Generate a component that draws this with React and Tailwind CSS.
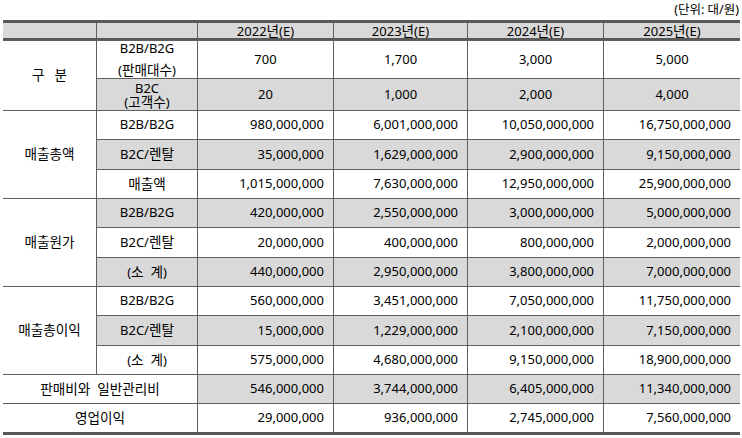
const years = ["2022년(E)", "2023년(E)", "2024년(E)", "2025년(E)"];

const groups = [
  {
    label: "매출총액",
    rows: [
      { name: "B2B/B2G", shade: false, v: ["980,000,000", "6,001,000,000", "10,050,000,000", "16,750,000,000"] },
      { name: "B2C/렌탈", shade: true, v: ["35,000,000", "1,629,000,000", "2,900,000,000", "9,150,000,000"] },
      { name: "매출액", shade: false, v: ["1,015,000,000", "7,630,000,000", "12,950,000,000", "25,900,000,000"] },
    ],
  },
  {
    label: "매출원가",
    rows: [
      { name: "B2B/B2G", shade: true, v: ["420,000,000", "2,550,000,000", "3,000,000,000", "5,000,000,000"] },
      { name: "B2C/렌탈", shade: false, v: ["20,000,000", "400,000,000", "800,000,000", "2,000,000,000"] },
      { name: "(소\u00a0\u00a0계)", shade: true, v: ["440,000,000", "2,950,000,000", "3,800,000,000", "7,000,000,000"] },
    ],
  },
  {
    label: "매출총이익",
    rows: [
      { name: "B2B/B2G", shade: false, v: ["560,000,000", "3,451,000,000", "7,050,000,000", "11,750,000,000"] },
      { name: "B2C/렌탈", shade: true, v: ["15,000,000", "1,229,000,000", "2,100,000,000", "7,150,000,000"] },
      { name: "(소\u00a0\u00a0계)", shade: false, v: ["575,000,000", "4,680,000,000", "9,150,000,000", "18,900,000,000"] },
    ],
  },
];

// hangul glyphs render a touch larger in the original sheet
function T({ s }) {
  return (
    <span>
      {s.split(/([\uac00-\ud7a3]+)/).map((part, i) =>
        /[\uac00-\ud7a3]/.test(part) ? (
          <span key={i} className="text-[13.6px]">
            {part}
          </span>
        ) : (
          part
        )
      )}
    </span>
  );
}

function Cell({ children, shade, right, className = "" }) {
  return (
    <div
      className={`flex items-center ${right ? "justify-end pr-[9px]" : "justify-center"} ${
        shade ? "bg-[#d9d9d9]" : "bg-white"
      } ${className}`}
    >
      {children}
    </div>
  );
}

export default function App() {
  return (
    <div className="bg-white w-[742px] h-[438px] pl-[3px] text-[13px] text-black font-['Noto_Sans','Noto_Sans_CJK_KR',sans-serif]">
      {/* unit caption */}
      <div className="h-[20px] w-[737px] flex items-center justify-end text-[12.5px] pr-[1px]">
        (단위: 대/원)
      </div>

      <div className="grid w-[737px] gap-px bg-[#606060] border-t-[3px] border-b-[3px] border-[#595959] grid-cols-[93px_100px_135px_133px_135px_136px] grid-rows-[17px_37px_31px_28px_29px_28px_28px_29px_28px_28px_29px_28px_28px_28px]">
        {/* header */}
        <Cell shade className="border-b-2 border-[#595959]" />
        <Cell shade className="border-b-2 border-[#595959]" />
        {years.map((y) => (
          <Cell key={y} shade className="border-b-2 border-[#595959] leading-none pt-px">
            <T s={y} />
          </Cell>
        ))}

        {/* 구분 */}
        <Cell className="row-span-2 gap-[10px]">
          <T s="구" />
          <T s="분" />
        </Cell>
        <Cell className="flex-col leading-[21px]">
          <span>B2B/B2G</span>
          <T s="(판매대수)" />
        </Cell>
        {["700", "1,700", "3,000", "5,000"].map((v) => (
          <Cell key={v}>{v}</Cell>
        ))}
        <Cell shade className="flex-col leading-[14px]">
          <span>B2C</span>
          <T s="(고객수)" />
        </Cell>
        {["20", "1,000", "2,000", "4,000"].map((v) => (
          <Cell key={v} shade>
            {v}
          </Cell>
        ))}

        {groups.map((g) => (
          <div key={g.label} className="contents">
            <Cell className="row-span-3">
              <T s={g.label} />
            </Cell>
            {g.rows.map((r, i) => (
              <div key={i} className="contents">
                <Cell shade={r.shade}>
                  <T s={r.name} />
                </Cell>
                {r.v.map((v, j) => (
                  <Cell key={j} shade={r.shade} right>
                    {v}
                  </Cell>
                ))}
              </div>
            ))}
          </div>
        ))}

        {/* 판매비와 일반관리비 */}
        <Cell className="col-span-2">
          <T s={"판매비와\u00a0\u00a0일반관리비"} />
        </Cell>
        {["546,000,000", "3,744,000,000", "6,405,000,000", "11,340,000,000"].map((v) => (
          <Cell key={v} shade right>
            {v}
          </Cell>
        ))}

        {/* 영업이익 */}
        <Cell className="col-span-2">
          <T s="영업이익" />
        </Cell>
        {["29,000,000", "936,000,000", "2,745,000,000", "7,560,000,000"].map((v) => (
          <Cell key={v} right>
            {v}
          </Cell>
        ))}
      </div>
    </div>
  );
}
